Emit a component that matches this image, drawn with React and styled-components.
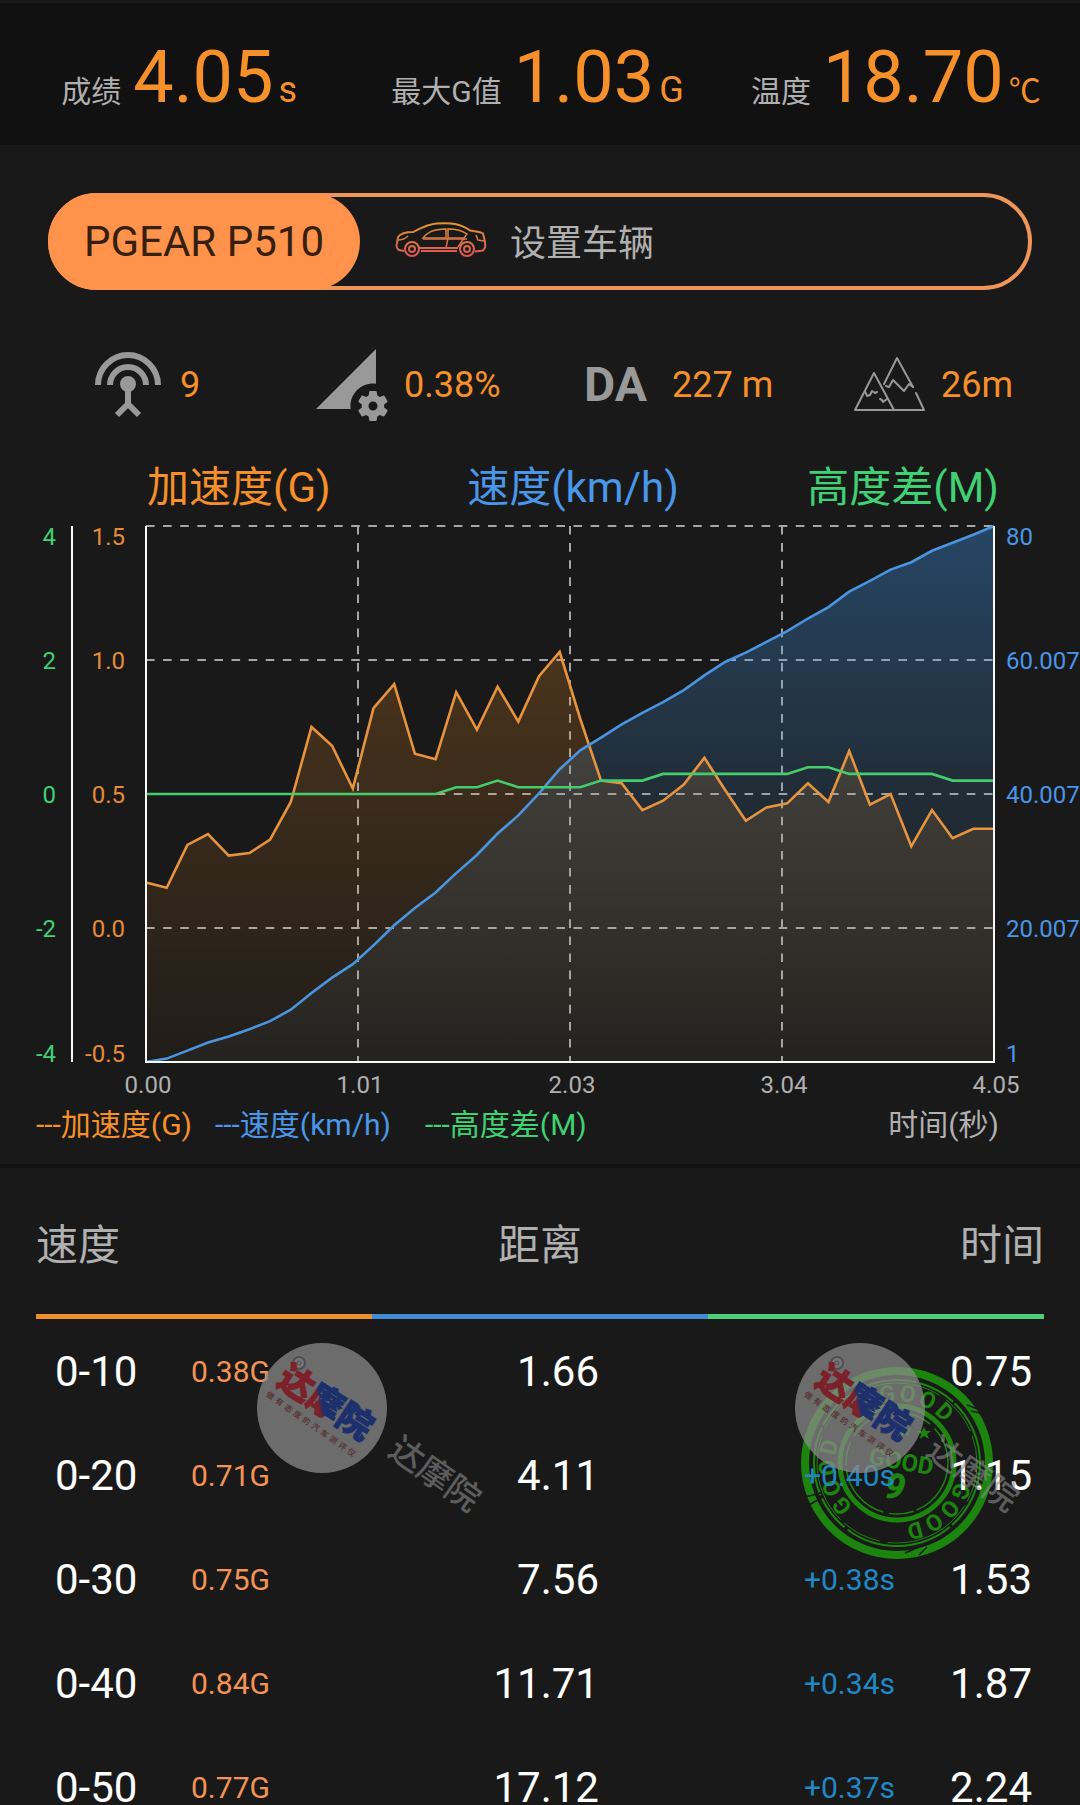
import React from 'react';
import styled, { createGlobalStyle } from 'styled-components';
import { MdPermDataSetting } from 'react-icons/md';

const colors = {
  page: '#191919',
  panel: '#111111',
  orange: '#f5902a',
  coral: '#ff934c',
  blue: '#4a96e8',
  green: '#3fd174',
  text: '#b0b0b0',
  icon: '#999999',
};

const GlobalStyle = createGlobalStyle`
  * {
    box-sizing: border-box;
  }

  body {
    margin: 0;
    background: ${colors.page};
    color: ${colors.text};
    font-family: Roboto, 'Noto Sans CJK SC', sans-serif;
  }

  button {
    border: 0;
    padding: 0;
    background: none;
    color: inherit;
    font: inherit;
    cursor: pointer;
  }
`;

const Screen = styled.main`
  display: flex;
  flex-direction: column;
  height: 100vh;
  overflow: hidden;
`;

const Summary = styled.header`
  display: grid;
  grid-template-columns: repeat(3, 1fr);
  flex-shrink: 0;
  border-top: 3px solid ${colors.page};
  padding: 33px 5px 25px 0;
  background: ${colors.panel};
`;

const SummaryItem = styled.div`
  display: flex;
  justify-content: center;
  align-items: baseline;
  height: 84px;
  line-height: 84px;
  white-space: nowrap;
`;

const SummaryLabel = styled.span`
  margin-right: 12px;
  font-size: 30px;
`;

const SummaryValue = styled.span`
  color: ${colors.orange};
  font-size: 72px;
`;

const SummaryUnit = styled.span`
  margin-left: 5px;
  color: ${colors.orange};
  font-size: ${({ $small }) => ($small ? 32 : 36)}px;
`;

const DevicePill = styled.div`
  display: flex;
  flex-shrink: 0;
  height: 97px;
  margin: 48px 48px 0;
  border: 4px solid #f0955a;
  border-radius: 49px;
`;

const DeviceButton = styled.button`
  && {
    width: 312px;
    margin: -4px 0 -4px -4px;
    border-radius: 49px;
    background: ${colors.coral};
    color: #35200f;
    font-size: 42px;
    line-height: 97px;
  }
`;

const VehicleButton = styled.button`
  && {
    display: flex;
    flex: 1;
    align-items: center;
    gap: 23px;
    padding: 0 0 4px 35px;
    font-size: 36px;
  }
`;

const StatRow = styled.section`
  display: grid;
  grid-template-columns: 224fr 268fr 269fr 227fr;
  flex-shrink: 0;
  margin-top: 59px;
  padding-left: 92px;
`;

const Stat = styled.div`
  display: flex;
  align-items: center;
  gap: 16px;
  height: 72px;
  color: ${colors.orange};
  font-size: 36px;
  white-space: nowrap;

  svg {
    color: ${colors.icon};
  }
`;

const StatTag = styled.span`
  width: 72px;
  color: ${colors.icon};
  font-size: 48px;
  font-weight: 700;
  line-height: 72px;
`;

const ChartSection = styled.section`
  flex-shrink: 0;
  padding-bottom: 19px;
  border-bottom: 4px solid ${colors.panel};
`;

const ChartTitles = styled.div`
  display: grid;
  grid-template-columns: 1fr auto 1fr;
  margin: 39px 81px 0 147px;
  font-size: 42px;
  line-height: 56px;
  white-space: nowrap;
`;

const SeriesName = styled.span`
  color: ${({ $color }) => $color};
  text-align: ${({ $align }) => $align || 'left'};
`;

const Chart = styled.svg`
  display: block;
  width: 100%;
  height: auto;
  font-size: 24px;
`;

const Legend = styled.div`
  display: grid;
  grid-template-columns: 179px 210px 1fr auto;
  margin-top: 5px;
  padding: 0 81px 0 36px;
  font-size: 30px;
  line-height: 40px;
  white-space: nowrap;
`;

const Results = styled.section`
  position: relative;
  flex: 1;
  min-height: 0;
  padding: 0 36px;
`;

const ResultTable = styled.table`
  position: relative;
  width: 100%;
  border-collapse: separate;
  border-spacing: 0;
  table-layout: fixed;
  white-space: nowrap;
`;

const Heading = styled.th`
  height: 151px;
  padding: 0;
  border-bottom: 5px solid ${({ $color }) => $color};
  font-size: 42px;
  font-weight: 400;
  text-align: ${({ $align }) => $align};
`;

const Cell = styled.td`
  height: 104px;
  padding: 0;
  color: #ffffff;
  font-size: 42px;
`;

const SpeedCell = styled(Cell)`
  padding-left: 19px;
`;

const ForceCell = styled(Cell)`
  color: #f39355;
  font-size: 30px;
`;

const DistanceCell = styled(Cell)`
  padding-right: 109px;
  text-align: right;
`;

const DeltaCell = styled(Cell)`
  color: #2088c4;
  font-size: 30px;
  text-align: right;
`;

const TimeCell = styled(Cell)`
  padding-right: 12px;
  text-align: right;
`;

const StampMark = styled.svg`
  position: absolute;
  top: 198px;
  left: 74.1%;
  width: 194px;
  height: 194px;
`;

const Watermark = styled.svg`
  position: absolute;
  top: 174px;
  left: ${({ $left }) => $left};
  width: 240px;
  height: 190px;
  pointer-events: none;
`;

const summary = [
  { label: '成绩', value: '4.05', unit: 's' },
  { label: '最大G值', value: '1.03', unit: 'G' },
  { label: '温度', value: '18.70', unit: '℃', small: true },
];

const results = [
  { speed: '0-10', force: '0.38G', distance: '1.66', delta: '', time: '0.75' },
  { speed: '0-20', force: '0.71G', distance: '4.11', delta: '+0.40s', time: '1.15' },
  { speed: '0-30', force: '0.75G', distance: '7.56', delta: '+0.38s', time: '1.53' },
  { speed: '0-40', force: '0.84G', distance: '11.71', delta: '+0.34s', time: '1.87' },
  { speed: '0-50', force: '0.77G', distance: '17.12', delta: '+0.37s', time: '2.24' },
];

// one sample every 0.1s
const acceleration = [
  0.17, 0.15, 0.31, 0.35, 0.27, 0.28, 0.33, 0.47, 0.75, 0.68, 0.52, 0.82, 0.91, 0.65, 0.63, 0.88,
  0.74, 0.9, 0.77, 0.94, 1.03, 0.78, 0.55, 0.54, 0.44, 0.475, 0.535, 0.635, 0.515, 0.4, 0.45, 0.465,
  0.54, 0.47, 0.66, 0.46, 0.5, 0.305, 0.44, 0.335, 0.37, 0.37,
];
const speed = [
  0, 0.5, 1.7, 2.9, 3.8, 4.9, 6.1, 7.8, 10.3, 12.6, 14.6, 17.4, 20.4, 23, 25.3, 28.2, 30.9, 34.1,
  36.8, 40.1, 43.7, 46.5, 48.4, 50.4, 52.1, 53.7, 55.5, 57.7, 59.7, 61.1, 62.7, 64.3, 66.2, 67.9,
  70.2, 71.8, 73.5, 74.6, 76.3, 77.5, 78.7, 80,
];
const height = [
  0, 0, 0, 0, 0, 0, 0, 0, 0, 0, 0, 0, 0, 0, 0, 0.1, 0.1, 0.2, 0.1, 0.1, 0.1, 0.1, 0.2, 0.2, 0.2,
  0.3, 0.3, 0.3, 0.3, 0.3, 0.3, 0.3, 0.4, 0.4, 0.3, 0.3, 0.3, 0.3, 0.3, 0.2, 0.2, 0.2,
];

const plot = { left: 146, right: 994, top: 10, bottom: 546 };
const plotWidth = plot.right - plot.left;
const plotHeight = plot.bottom - plot.top;
const quarters = [0, 1, 2, 3, 4];

const toPoints = (values, min, max) =>
  values
    .map((v, i) => {
      const x = plot.left + (plotWidth * i) / (values.length - 1);
      const y = plot.bottom - (plotHeight * (v - min)) / (max - min);
      return `${x.toFixed(1)},${y.toFixed(1)}`;
    })
    .join(' ');

const toArea = points =>
  `${plot.left},${plot.bottom} ${points} ${plot.right},${plot.bottom}`;

// the first and last labels are kept inside the plot's height
const labelY = i => {
  if (i === 0) return plot.top + 19;
  if (i === 4) return plot.bottom;
  return plot.top + (plotHeight * i) / 4 + 9;
};

const AxisLabels = ({ labels, x, color, anchor }) => (
  <g fill={color} textAnchor={anchor}>
    {labels.map((label, i) => (
      <text key={label} x={x} y={labelY(i)}>
        {label}
      </text>
    ))}
  </g>
);

const RunChart = () => {
  const force = toPoints(acceleration, -0.5, 1.5);
  const velocity = toPoints(speed, 0, 80);
  const altitude = toPoints(height, -4, 4);

  return (
    <Chart viewBox="0 0 1080 584" role="img" aria-label="加速度、速度、高度差">
      <defs>
        <linearGradient id="force" gradientUnits="userSpaceOnUse" x1="0" x2="0" y1="10" y2="546">
          <stop offset="0" stopColor="#ff9628" stopOpacity="0.27" />
          <stop offset="1" stopColor="#ff9628" stopOpacity="0.03" />
        </linearGradient>
        <linearGradient id="velocity" gradientUnits="userSpaceOnUse" x1="0" x2="0" y1="10" y2="546">
          <stop offset="0" stopColor="#3c96f0" stopOpacity="0.36" />
          <stop offset="0.5" stopColor="#4c98dc" stopOpacity="0.15" />
          <stop offset="1" stopColor="#80a8b8" stopOpacity="0.04" />
        </linearGradient>
      </defs>

      <g stroke="#a6a6a6" strokeWidth="2" strokeDasharray="8.6 8.5">
        {quarters.slice(0, 4).map(i => {
          const y = plot.top + (plotHeight * i) / 4;
          return <line key={i} x1={plot.left} x2={plot.right} y1={y} y2={y} />;
        })}
        {quarters.slice(1, 4).map(i => {
          const x = plot.left + (plotWidth * i) / 4;
          return <line key={i} x1={x} x2={x} y1={plot.top} y2={plot.bottom} />;
        })}
      </g>

      <polygon points={toArea(force)} fill="url(#force)" />
      <polygon points={toArea(velocity)} fill="url(#velocity)" />
      <g fill="none" strokeWidth="2.6">
        <polyline points={force} stroke="#e8943e" />
        <polyline points={velocity} stroke="#4a94e0" />
        <polyline points={altitude} stroke="#45cc6c" />
      </g>

      <g stroke="#f8f8f8" strokeWidth="2">
        <line x1="72" x2="72" y1={plot.top} y2={plot.bottom} />
        <polyline
          fill="none"
          points={`${plot.left},${plot.top} ${plot.left},${plot.bottom} ${plot.right},${plot.bottom} ${plot.right},${plot.top}`}
        />
      </g>

      <AxisLabels labels={['4', '2', '0', '-2', '-4']} x={56} color={colors.green} anchor="end" />
      <AxisLabels
        labels={['1.5', '1.0', '0.5', '0.0', '-0.5']}
        x={125}
        color="#e68c38"
        anchor="end"
      />
      <AxisLabels
        labels={['80', '60.007', '40.007', '20.007', '1']}
        x={1006}
        color={colors.blue}
        anchor="start"
      />
      <g fill={colors.text} textAnchor="middle">
        {['0.00', '1.01', '2.03', '3.04', '4.05'].map((label, i) => (
          <text key={label} x={plot.left + 2 + (plotWidth * i) / 4} y={577}>
            {label}
          </text>
        ))}
      </g>
    </Chart>
  );
};

const AntennaIcon = () => (
  <svg width="72" height="72" viewBox="0 0 72 72" fill="none" stroke="currentColor" strokeWidth="6">
    <path d="M6 36a30 30 0 0 1 60 0M18 36a18 18 0 0 1 36 0" />
    <path d="M36 36v20M25 66l11-11 11 11" />
    <circle cx="36" cy="35" r="8" fill="currentColor" stroke="none" />
  </svg>
);

const MountainIcon = () => (
  <svg
    width="72"
    height="72"
    viewBox="0 0 72 72"
    fill="none"
    stroke="currentColor"
    strokeWidth="2"
    strokeLinecap="round"
    strokeLinejoin="round"
  >
    <path d="M41 61H2l19-37 20 37h30l-8-17M31 35L44 9l16 29" />
    <path d="M12 42l2 5 3-1 2-4 3 2 2-1M27 50l2 1 1 2 4-3" />
    <path d="M33 37l3 1 4-7 4 4 7 7 5-7 4 3" />
  </svg>
);

const CarIcon = () => (
  <svg width="92" height="36" viewBox="0 0 92 36" fill="none" stroke="url(#car)" strokeWidth="2">
    <defs>
      <linearGradient id="car" gradientUnits="userSpaceOnUse" x1="0" x2="0" y1="0" y2="36">
        <stop offset="0" stopColor="#e8962c" />
        <stop offset="0.45" stopColor="#d97a45" />
        <stop offset="1" stopColor="#e0505a" />
      </linearGradient>
    </defs>
    <path d="M9 29l-5-1c-2-1-3-4-2-7l1-6c3-4 9-5 15-5C26 6 33 2 42 1.500c14-1 23 0 33 7 5 1 10 1 13 3 1 5 3 9 2 14l-2 3-8 1" />
    <path d="M26 29h36M24 26h39" />
    <path d="M28 16c4-5 9-9 23-9v9zM53 7c9 0 15 2 19 5l-3 4H53zM53 16l-2 10M69 16l-6 9" strokeWidth="1.500" />
    <path d="M3 18c4 0 7-1 10-4M81 13l2 5 6 1M28 17h44" strokeWidth="1.500" />
    <circle cx="17" cy="27" r="7" />
    <circle cx="17" cy="27" r="3" />
    <circle cx="72" cy="27" r="7" />
    <circle cx="72" cy="27" r="3" />
  </svg>
);

const stampAngles = [-6, 11, 28, 45];

const Stamp = () => (
  <StampMark viewBox="-97 -97 194 194" aria-hidden="true">
    <g fill="none" stroke="#1c850d">
      <circle r="92" strokeWidth="8" />
      <circle r="83" strokeWidth="2" strokeDasharray="70 3 110 4 38 2" />
      <circle r="80" strokeWidth="1" strokeDasharray="40 5 90 8" />
      <circle r="57" strokeWidth="5" />
      <circle r="51" strokeWidth="1.500" strokeDasharray="60 3 25 6" />
    </g>
    <g stroke={colors.page} strokeWidth="1.500">
      <path d="M70-58l16 6M74-52l18 4M-92 34l16-4M-88 42l14-8M8 90l14-6M22 92l8-8" />
    </g>
    <g fill="#1c850d" fontWeight="700" textAnchor="middle">
      {[-92, 30, 148].map(start =>
        stampAngles.map((angle, i) => (
          <text
            key={start + angle}
            transform={`rotate(${start + angle + 90})`}
            y="-62"
            fontSize="23"
          >
            {'GOOD'[i]}
          </text>
        ))
      )}
      <g transform="rotate(10)">
        <text x="4" y="6" fontSize="24">
          GOOD
        </text>
        <text x="2" y="36" fontSize="36" fontStyle="italic" fontWeight="900">
          9
        </text>
      </g>
      <path d="M27-36l2 4 5 0-4 3 2 5-5-3-4 3 1-5-4-3h5zM8-38l2 4h4l-3 3 1 4-4-2-4 2 1-4-3-3h4z" />
    </g>
  </StampMark>
);

const slogan = [...'做有态度的汽车测评仪'];

const BrandWatermark = ({ id, left }) => (
  <Watermark $left={left} viewBox="0 0 240 190" aria-hidden="true">
    <defs>
      <linearGradient id={id} x1="0" x2="1" y1="0.7" y2="0.3">
        <stop offset="0.42" stopColor="#7c2029" />
        <stop offset="0.46" stopColor="#1d2f6c" />
      </linearGradient>
    </defs>
    <circle cx="66" cy="66" r="65" fill="#8c8c8c" fillOpacity="0.72" />
    <circle cx="43" cy="21" r="6" fill="#777777" stroke="#4d4d55" strokeWidth="2" />
    <circle cx="43" cy="21" r="2" fill="none" stroke="#4d4d55" />
    <g transform="translate(70 60) rotate(33)" textAnchor="middle">
      <text
        y="13"
        fontSize="35"
        fontWeight="900"
        fill={`url(#${id})`}
        stroke={`url(#${id})`}
        strokeWidth="1"
      >
        达摩院
      </text>
    </g>
    <g transform="translate(55 82) rotate(35)" textAnchor="middle" fill="#59363a">
      {slogan.map((char, i) => (
        <text key={char} x={(i - 4.5) * 11} y="3" fontSize="8" fontWeight="700">
          {char}
        </text>
      ))}
    </g>
    <g transform="translate(179 132) rotate(35)" textAnchor="middle">
      <text y="12" fontSize="34" fontWeight="500" fill="#8c8c8c" fillOpacity="0.6">
        达摩院
      </text>
    </g>
  </Watermark>
);

const App = () => (
  <>
    <GlobalStyle />
    <Screen>
      <Summary>
        {summary.map(({ label, value, unit, small }) => (
          <SummaryItem key={label}>
            <SummaryLabel>{label}</SummaryLabel>
            <SummaryValue>{value}</SummaryValue>
            <SummaryUnit $small={small}>{unit}</SummaryUnit>
          </SummaryItem>
        ))}
      </Summary>

      <DevicePill>
        <DeviceButton type="button">PGEAR P510</DeviceButton>
        <VehicleButton type="button">
          <CarIcon />
          设置车辆
        </VehicleButton>
      </DevicePill>

      <StatRow>
        <Stat>
          <AntennaIcon />
          <span>9</span>
        </Stat>
        <Stat>
          <MdPermDataSetting size={72} />
          <span>0.38%</span>
        </Stat>
        <Stat>
          <StatTag>DA</StatTag>
          <span>227 m</span>
        </Stat>
        <Stat>
          <MountainIcon />
          <span>26m</span>
        </Stat>
      </StatRow>

      <ChartSection>
        <ChartTitles>
          <SeriesName $color={colors.orange}>加速度(G)</SeriesName>
          <SeriesName $color={colors.blue}>速度(km/h)</SeriesName>
          <SeriesName $color={colors.green} $align="right">
            高度差(M)
          </SeriesName>
        </ChartTitles>
        <RunChart />
        <Legend>
          <SeriesName $color={colors.orange}>---加速度(G)</SeriesName>
          <SeriesName $color={colors.blue}>---速度(km/h)</SeriesName>
          <SeriesName $color={colors.green}>---高度差(M)</SeriesName>
          <SeriesName $color={colors.text}>时间(秒)</SeriesName>
        </Legend>
      </ChartSection>

      <Results>
        <Stamp />
        <ResultTable>
          <colgroup>
            <col width="155" />
            <col width="181" />
            <col />
            <col width="187" />
            <col width="149" />
          </colgroup>
          <thead>
            <tr>
              <Heading colSpan={2} $color="#ee8f2e" $align="left">
                速度
              </Heading>
              <Heading $color="#438bd0" $align="center">
                距离
              </Heading>
              <Heading colSpan={2} $color="#4bd077" $align="right">
                时间
              </Heading>
            </tr>
          </thead>
          <tbody>
            {results.map(row => (
              <tr key={row.speed}>
                <SpeedCell>{row.speed}</SpeedCell>
                <ForceCell>{row.force}</ForceCell>
                <DistanceCell>{row.distance}</DistanceCell>
                <DeltaCell>{row.delta}</DeltaCell>
                <TimeCell>{row.time}</TimeCell>
              </tr>
            ))}
          </tbody>
        </ResultTable>
        <BrandWatermark id="brand-left" left="23.7%" />
        <BrandWatermark id="brand-right" left="73.5%" />
      </Results>
    </Screen>
  </>
);

export default App;
